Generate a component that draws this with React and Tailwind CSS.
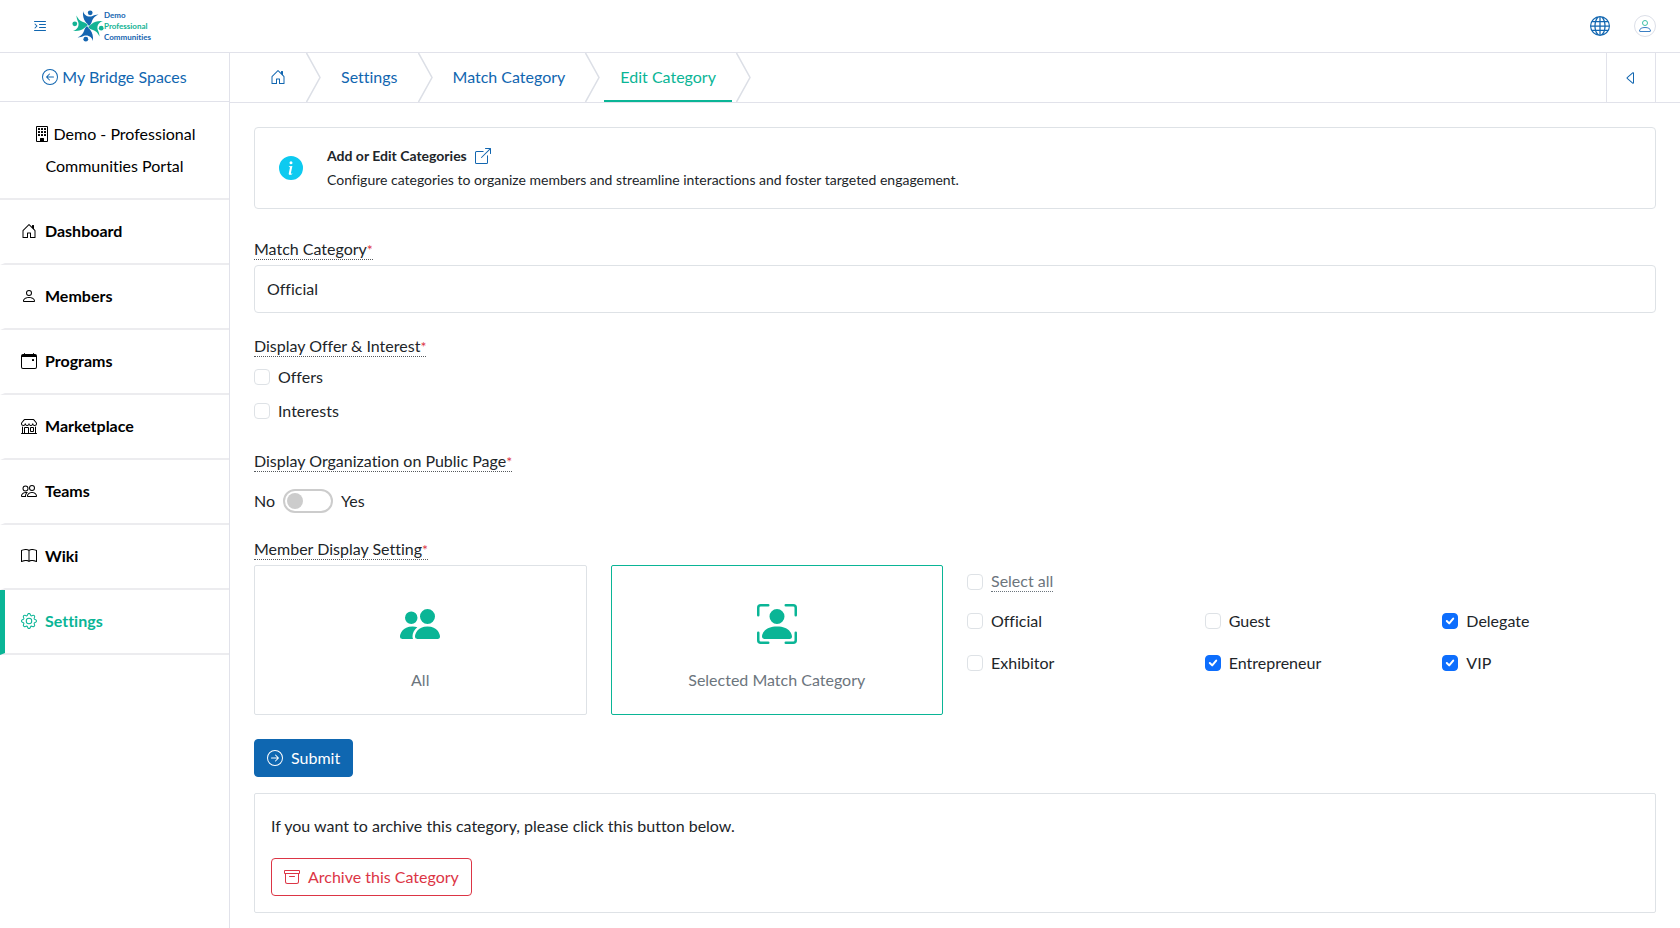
import React, { useState } from 'react';
import {
    BsArchive,
    BsArrowLeftCircle,
    BsArrowRightCircle,
    BsBook,
    BsBoxArrowUpRight,
    BsBuilding,
    BsCalendarEvent,
    BsCaretLeft,
    BsGear,
    BsGlobe,
    BsHouseDoor,
    BsInfoCircleFill,
    BsPeople,
    BsPeopleFill,
    BsPerson,
    BsPersonBoundingBox,
    BsShop,
    BsTextIndentLeft,
} from 'react-icons/bs';

const navItems = [
    { label: 'Dashboard', icon: BsHouseDoor },
    { label: 'Members', icon: BsPerson },
    { label: 'Programs', icon: BsCalendarEvent },
    { label: 'Marketplace', icon: BsShop },
    { label: 'Teams', icon: BsPeople },
    { label: 'Wiki', icon: BsBook },
    { label: 'Settings', icon: BsGear, active: true },
];

const categories = ['Official', 'Guest', 'Delegate', 'Exhibitor', 'Entrepreneur', 'VIP'];

const LogoFigure = ({ color, angle }) => (
    <g transform={`rotate(${angle} 16 16)`} fill={color}>
        <circle cx="18.2" cy="2.8" r="2.4" />
        <path d="M11 1 C11.800 5 16 7.600 20 6.200 C22 5.300 24 4.500 26.500 4.500 C23 6 21 8 20 11 C19.500 13 18.500 14.800 17 16 C15.500 13 10.200 11.500 11 1 Z" />
    </g>
);

const Logo = () => (
    <a href="#" className="flex items-center">
        <svg viewBox="0 0 32 32" className="h-8 w-8">
            <LogoFigure color="#1565b0" angle={0} />
            <LogoFigure color="#12b394" angle={90} />
            <LogoFigure color="#1565b0" angle={180} />
            <LogoFigure color="#12b394" angle={270} />
        </svg>
        <span className="flex flex-col pt-px text-[8px] leading-[11px] font-bold text-[#1565b0]">
            <span>Demo</span>
            <span className="text-[#12b394]">Professional</span>
            <span>Communities</span>
        </span>
    </a>
);

const AccountIcon = () => (
    <svg viewBox="0 0 16 16" className="h-4 w-4" fill="none">
        <circle cx="8" cy="5" r="2.5" stroke="#3fc0a6" />
        <path
            d="M2.500 13 C2.500 10.500 5 9.500 8 9.500 C11 9.500 13.500 10.500 13.500 13 C13.500 13.300 13.300 13.500 13 13.500 H3 C2.700 13.500 2.500 13.300 2.500 13 Z"
            stroke="#3b7fc4"
        />
    </svg>
);

const Header = () => (
    <header className="flex h-[53px] items-center justify-between border-b border-[#e1e2ea] pr-6 pl-8">
        <div className="flex items-center gap-6">
            <button type="button" aria-label="Toggle menu" className="text-[#1166b0]">
                <BsTextIndentLeft className="h-4 w-4" />
            </button>
            <Logo />
        </div>
        <div className="flex items-center gap-6">
            <button type="button" aria-label="Language" className="text-[#1166b0]">
                <BsGlobe className="h-5 w-5" />
            </button>
            <button
                type="button"
                aria-label="Account"
                className="flex h-[22px] w-[22px] items-center justify-center rounded-full border border-[#dcdfe8]"
            >
                <AccountIcon />
            </button>
        </div>
    </header>
);

const Sidebar = () => (
    <aside className="w-[230px] shrink-0 border-r border-[#e1e2ea]">
        <a
            href="#"
            className="flex h-[49px] items-center justify-center gap-1 border-b border-[#e1e2ea] text-[#1166b0]"
        >
            <BsArrowLeftCircle className="h-4 w-4" />
            My Bridge Spaces
        </a>
        <div className="border-b-2 border-[#ececef] px-8 py-4 text-center leading-8 text-black">
            <BsBuilding className="mr-1 inline h-4 w-4 align-[-2px]" />
            Demo - Professional Communities Portal
        </div>
        <nav>
            {navItems.map(({ label, icon: Icon, active }) => (
                <a
                    key={label}
                    href="#"
                    className={`flex h-[65px] items-center gap-2 border-b-2 border-l-[5px] border-b-[#ececef] pb-0.5 pl-4 font-bold ${
                        active ? 'border-l-[#0ab596] text-[#0ab596]' : 'border-l-transparent text-black'
                    }`}
                >
                    <Icon className="h-4 w-4" />
                    {label}
                </a>
            ))}
        </nav>
    </aside>
);

const Chevron = () => (
    <svg viewBox="0 0 15 49" className="h-[49px] w-[15px] shrink-0" fill="none" stroke="#dcdfe6" strokeWidth="1.5">
        <path d="M0.500 0 L14 24.500 L0.500 49" />
    </svg>
);

const Breadcrumb = () => (
    <div className="flex h-[50px] items-stretch justify-between border-b border-[#e1e2ea] pr-6">
        <nav className="flex items-stretch text-[#1166b0]">
            <a href="#" aria-label="Home" className="flex items-center pr-5 pb-0.5 pl-10">
                <BsHouseDoor className="h-4 w-4" />
            </a>
            <Chevron />
            <a href="#" className="flex items-center px-5 pb-0.5">Settings</a>
            <Chevron />
            <a href="#" className="flex items-center px-5 pb-0.5">Match Category</a>
            <Chevron />
            <a
                href="#"
                aria-current="page"
                className="mx-1 flex items-center border-b-2 border-[#0ab596] px-4 text-[#0ab596]"
            >
                Edit Category
            </a>
            <Chevron />
        </nav>
        <button
            type="button"
            aria-label="Collapse panel"
            className="flex w-[50px] items-center justify-center border-x border-[#e1e2ea] text-[#1166b0]"
        >
            <BsCaretLeft className="h-4 w-4" />
        </button>
    </div>
);

const FieldLabel = ({ children, as: Tag = 'span', ...rest }) => (
    <Tag className="border-b border-dotted border-[#55595d] leading-5" {...rest}>
        {children}
        <span className="text-sm leading-4 text-[#dc3545]">*</span>
    </Tag>
);

const Checkbox = ({ label, muted, checked, onChange }) => (
    <label className={`flex items-center gap-2 ${muted ? 'text-[#6c757d]' : ''}`}>
        <span className="relative flex h-4 w-4 shrink-0">
            <input
                type="checkbox"
                checked={checked}
                onChange={onChange}
                className="peer h-4 w-4 appearance-none rounded border border-[#dee2e6] bg-white checked:border-[#0d6efd] checked:bg-[#0d6efd]"
            />
            <svg
                viewBox="0 0 20 20"
                className="pointer-events-none absolute inset-0 hidden h-4 w-4 peer-checked:block"
                fill="none"
                stroke="#fff"
                strokeWidth="2.5"
                strokeLinecap="round"
                strokeLinejoin="round"
            >
                <path d="M6 10l3 3 5-6" />
            </svg>
        </span>
        <span className={muted ? 'border-b border-dotted border-[#6c757d] leading-5' : ''}>{label}</span>
    </label>
);

const DisplayCard = ({ label, icon: Icon, selected, onClick }) => (
    <button
        type="button"
        aria-pressed={selected}
        onClick={onClick}
        className={`flex h-[150px] flex-col items-center justify-center gap-6 rounded-xs border pt-4 text-[#6c757d] ${
            selected ? 'border-[#0ab596]' : 'border-[#dee2e6]'
        }`}
    >
        <Icon className="h-10 w-10 text-[#0ab596]" />
        {label}
    </button>
);

const CategoryForm = () => {
    const [name, setName] = useState('Official');
    const [offers, setOffers] = useState(false);
    const [interests, setInterests] = useState(false);
    const [showOrg, setShowOrg] = useState(false);
    const [display, setDisplay] = useState('selected');
    const [selected, setSelected] = useState(['Delegate', 'Entrepreneur', 'VIP']);

    const allSelected = selected.length === categories.length;

    const toggleCategory = (category) => {
        setSelected((prev) =>
            prev.includes(category) ? prev.filter((item) => item !== category) : [...prev, category]
        );
    };

    return (
        <form onSubmit={(e) => e.preventDefault()}>
            {/* Name */}
            <div className="mt-[30px] flex flex-col items-start gap-[5px]">
                <FieldLabel as="label" htmlFor="category-name">Match Category</FieldLabel>
                <input
                    id="category-name"
                    type="text"
                    value={name}
                    onChange={(e) => setName(e.target.value)}
                    className="h-12 w-full rounded border border-[#dee2e6] px-3 pb-0.5 outline-none focus:border-[#1166b0]"
                />
            </div>

            {/* Offers and interests */}
            <div className="mt-[23px] flex flex-col items-start gap-2">
                <FieldLabel>Display Offer &amp; Interest</FieldLabel>
                <div className="flex flex-col gap-[10px]">
                    <Checkbox label="Offers" checked={offers} onChange={() => setOffers(!offers)} />
                    <Checkbox label="Interests" checked={interests} onChange={() => setInterests(!interests)} />
                </div>
            </div>

            {/* Organization switch */}
            <div className="mt-7 flex flex-col items-start gap-[17px]">
                <FieldLabel>Display Organization on Public Page</FieldLabel>
                <label className="flex items-center gap-2">
                    No
                    <input
                        type="checkbox"
                        role="switch"
                        aria-label="Display Organization on Public Page"
                        checked={showOrg}
                        onChange={() => setShowOrg(!showOrg)}
                        className="flex h-6 w-[50px] appearance-none items-center rounded-full border-2 border-[#ccc] px-0.5 before:h-4 before:w-4 before:rounded-full before:bg-[#ccc] checked:justify-end checked:border-[#0ab596] checked:before:bg-[#0ab596]"
                    />
                    Yes
                </label>
            </div>

            {/* Member display */}
            <div className="mt-[26px] flex flex-col items-start gap-[5px]">
                <FieldLabel>Member Display Setting</FieldLabel>
                <div className="grid w-full grid-cols-4 gap-6">
                    <DisplayCard
                        label="All"
                        icon={BsPeopleFill}
                        selected={display === 'all'}
                        onClick={() => setDisplay('all')}
                    />
                    <DisplayCard
                        label="Selected Match Category"
                        icon={BsPersonBoundingBox}
                        selected={display === 'selected'}
                        onClick={() => setDisplay('selected')}
                    />
                    <div className="col-span-2 flex flex-col gap-[17px] pt-[6px]">
                        <Checkbox
                            label="Select all"
                            muted
                            checked={allSelected}
                            onChange={() => setSelected(allSelected ? [] : categories)}
                        />
                        <div className="grid grid-cols-3 gap-x-6 gap-y-[18px]">
                            {categories.map((category) => (
                                <Checkbox
                                    key={category}
                                    label={category}
                                    checked={selected.includes(category)}
                                    onChange={() => toggleCategory(category)}
                                />
                            ))}
                        </div>
                    </div>
                </div>
            </div>

            <button
                type="submit"
                className="mt-6 flex h-[38px] items-center gap-2 rounded border border-[#0f67b1] bg-[#0f67b1] px-3 text-white"
            >
                <BsArrowRightCircle className="h-4 w-4" />
                Submit
            </button>
        </form>
    );
};

const App = () => (
    <div className="min-h-screen bg-white font-['Lato',sans-serif] text-base text-[#212529] [font-variant-ligatures:none]">
        <Header />
        <div className="flex min-h-[875px]">
            <Sidebar />
            <div className="min-w-0 flex-1">
                <Breadcrumb />
                <main className="px-6 pt-6 pb-4">
                    {/* Intro */}
                    <section className="flex items-center gap-6 rounded border border-[#dee2e6] px-6 py-4">
                        <BsInfoCircleFill className="h-6 w-6 shrink-0 text-[#0dcaf0]" />
                        <div className="text-sm leading-6">
                            <h1 className="flex items-center gap-2 font-bold">
                                Add or Edit Categories
                                <a href="#" aria-label="Open help" className="text-[#1166b0]">
                                    <BsBoxArrowUpRight className="h-4 w-4" />
                                </a>
                            </h1>
                            <p>
                                Configure categories to organize members and streamline interactions and foster targeted
                                engagement.
                            </p>
                        </div>
                    </section>

                    <CategoryForm />

                    {/* Archive */}
                    <section className="mt-4 rounded-xs border border-[#dee2e6] px-4 py-4">
                        <p className="leading-8">If you want to archive this category, please click this button below.</p>
                        <button
                            type="button"
                            className="mt-4 flex h-[38px] items-center gap-2 rounded border border-[#dc3545] px-3 text-[#dc3545]"
                        >
                            <BsArchive className="h-4 w-4" />
                            Archive this Category
                        </button>
                    </section>
                </main>
            </div>
        </div>
    </div>
);

export default App;
